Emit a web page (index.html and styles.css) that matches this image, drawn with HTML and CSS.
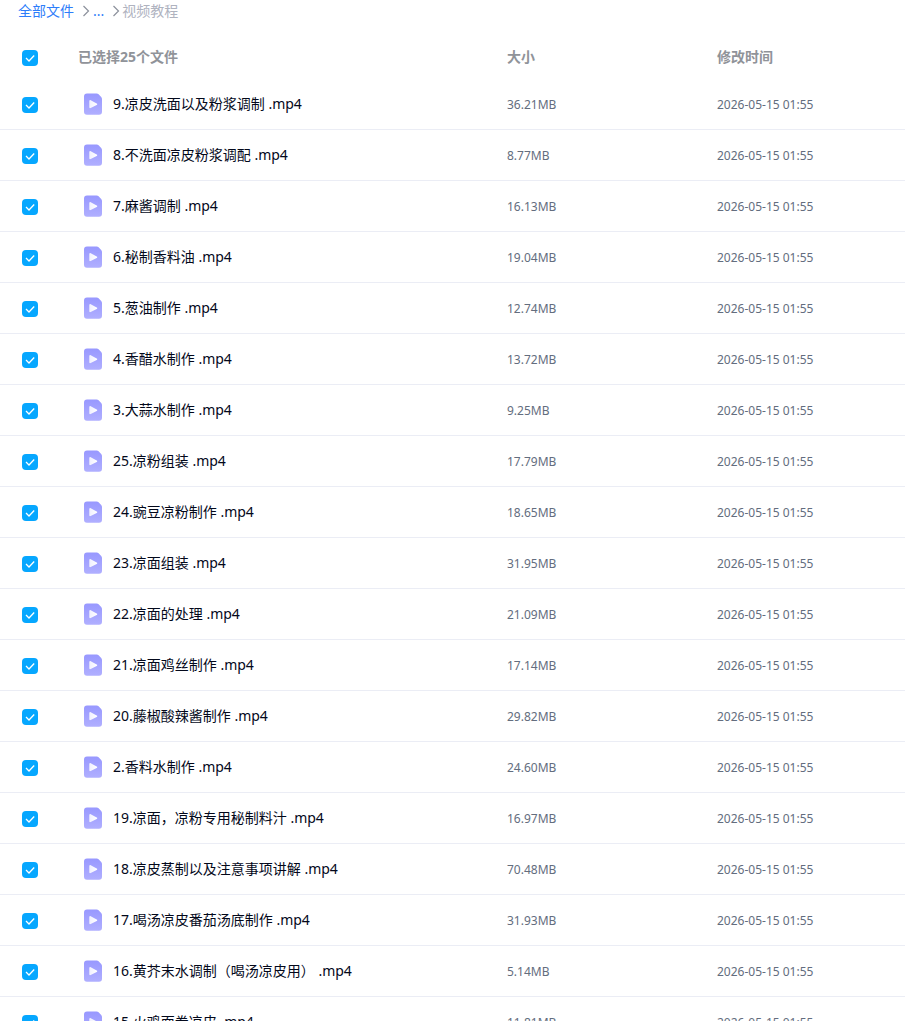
FILE: index.html
```html
<!DOCTYPE html>
<html lang="zh-CN">
<head>
  <meta charset="utf-8">
  <meta name="viewport" content="width=device-width, initial-scale=1">
  <title>视频教程</title>
  <link rel="stylesheet" href="styles.css">
</head>
<body>
  <svg class="sprite" aria-hidden="true">
    <defs>
      <linearGradient id="file-fill" x1="0" y1="0" x2="0" y2="1">
        <stop offset="0" stop-color="#9898ff"/>
        <stop offset="1" stop-color="#b0afff"/>
      </linearGradient>
      <linearGradient id="play-fill" x1="0" y1="0" x2="1" y2="0">
        <stop offset="0" stop-color="#f0f0ff"/>
        <stop offset="1" stop-color="#ffffff"/>
      </linearGradient>
    </defs>
    <symbol id="video-file" viewBox="0 0 18 22">
      <path fill="url(#file-fill)" d="M3 .4h9.600c.8 0 1.500.3 2 .8l2.600 2.700c.5.5.8 1.200.8 2V18.700a3 3 0 0 1-3 3H3a3 3 0 0 1-3-3V3.400a3 3 0 0 1 3-3z"/>
      <path fill="url(#play-fill)" d="M5.300 8v6.300c0 .8.7 1.200 1.400.8l6-3.200c.7-.4.7-1.100 0-1.500l-6-3.200c-.7-.4-1.400 0-1.400.8z"/>
    </symbol>
    <symbol id="chevron" viewBox="0 0 8 12">
      <path fill="none" stroke="#8c919c" stroke-width="1.200" d="M1.500 1l5 5-5 5"/>
    </symbol>
  </svg>

  <nav class="breadcrumb" aria-label="路径">
    <a class="crumb crumb-root" href="#">全部文件</a>
    <svg class="chevron" aria-hidden="true"><use href="#chevron"/></svg>
    <a class="crumb crumb-more" href="#">...</a>
    <svg class="chevron" aria-hidden="true"><use href="#chevron"/></svg>
    <span class="crumb-current" aria-current="page">视频教程</span>
  </nav>

  <main class="files">
    <table class="file-table">
      <colgroup>
        <col class="col-select">
        <col class="col-name">
        <col class="col-size">
        <col class="col-time">
      </colgroup>
      <thead>
        <tr>
          <th class="select"><input class="tick" type="checkbox" aria-label="全选" checked></th>
          <th scope="col">已选择25个文件</th>
          <th scope="col">大小</th>
          <th scope="col">修改时间</th>
        </tr>
      </thead>
      <tbody id="file-rows"></tbody>
    </table>
  </main>
  <script src="app.js"></script>
</body>
</html>
```
FILE: styles.css
```css
* {
  box-sizing: border-box;
}

body {
  display: flex;
  flex-direction: column;
  height: 100vh;
  margin: 0;
  overflow: hidden;
  background: #fff;
  color: #03081a;
  font: 14px/22px "Noto Sans", "Noto Sans CJK SC", sans-serif;
}

.sprite {
  position: absolute;
  width: 0;
  height: 0;
}

.breadcrumb {
  display: flex;
  flex: none;
  align-items: center;
  height: 22px;
  margin-bottom: 13px;
  padding-left: 18px;
}

.crumb {
  color: #2d7dfa;
  text-decoration: none;
}

.crumb-root {
  margin-right: 8px;
}

.crumb-more {
  margin: 0 8px 0 3px;
}

.crumb-current {
  margin-left: 2px;
  color: #afb3bf;
}

.chevron {
  width: 8px;
  height: 12px;
}

.files {
  flex: 1;
  min-height: 0;
  overflow: hidden;
}

.file-table {
  width: 100%;
  table-layout: fixed;
  border-collapse: separate;
  border-spacing: 0;
}

.col-select {
  width: 78px;
}

.col-size {
  width: 210px;
}

.col-time {
  width: 188px;
}

th,
td {
  padding: 0;
  text-align: left;
  vertical-align: middle;
}

th {
  height: 44px;
  color: #909399;
  font-weight: 700;
}

td {
  height: 51px;
  border-bottom: 1px solid #ebedf5;
}

.select {
  padding: 2px 0 0 22px;
}

.tick {
  display: block;
  width: 16px;
  height: 16px;
  margin: 0;
  appearance: none;
  border: 1px solid #c4c8d0;
  border-radius: 4px;
}

.tick:checked {
  border: 0;
  background: #06a7ff url("data:image/svg+xml,%3Csvg xmlns='http://www.w3.org/2000/svg' viewBox='0 0 16 16'%3E%3Cpath d='M4 8l3 3 5.200-5.500' fill='none' stroke='%23fff' stroke-width='1.300'/%3E%3C/svg%3E") center / 16px 16px no-repeat;
}

.file {
  display: flex;
  align-items: center;
  gap: 11px;
  padding-left: 6px;
  white-space: nowrap;
}

.file-icon {
  flex: none;
  width: 18px;
  height: 22px;
}

.meta {
  padding-top: 2px;
  color: #636d7e;
  font-size: 12px;
}
```
FILE: app.js
```js
const files = [
  ["9.凉皮洗面以及粉浆调制 .mp4", "36.21MB"],
  ["8.不洗面凉皮粉浆调配 .mp4", "8.77MB"],
  ["7.麻酱调制 .mp4", "16.13MB"],
  ["6.秘制香料油 .mp4", "19.04MB"],
  ["5.葱油制作 .mp4", "12.74MB"],
  ["4.香醋水制作 .mp4", "13.72MB"],
  ["3.大蒜水制作 .mp4", "9.25MB"],
  ["25.凉粉组装 .mp4", "17.79MB"],
  ["24.豌豆凉粉制作 .mp4", "18.65MB"],
  ["23.凉面组装 .mp4", "31.95MB"],
  ["22.凉面的处理 .mp4", "21.09MB"],
  ["21.凉面鸡丝制作 .mp4", "17.14MB"],
  ["20.藤椒酸辣酱制作 .mp4", "29.82MB"],
  ["2.香料水制作 .mp4", "24.60MB"],
  ["19.凉面，凉粉专用秘制料汁 .mp4", "16.97MB"],
  ["18.凉皮蒸制以及注意事项讲解 .mp4", "70.48MB"],
  ["17.喝汤凉皮番茄汤底制作 .mp4", "31.93MB"],
  ["16.黄芥末水调制（喝汤凉皮用） .mp4", "5.14MB"],
  ["15.火鸡面卷凉皮 .mp4", "11.81MB"],
];
const modified = "2026-05-15 01:55";

document.getElementById("file-rows").innerHTML = files
  .map(([name, size], i) => `
    <tr>
      <td class="select"><input class="tick" type="checkbox" id="file-${i}" checked></td>
      <td>
        <label class="file" for="file-${i}">
          <svg class="file-icon" aria-hidden="true"><use href="#video-file"/></svg>
          <span>${name}</span>
        </label>
      </td>
      <td class="meta">${size}</td>
      <td class="meta">${modified}</td>
    </tr>`)
  .join("");
```
